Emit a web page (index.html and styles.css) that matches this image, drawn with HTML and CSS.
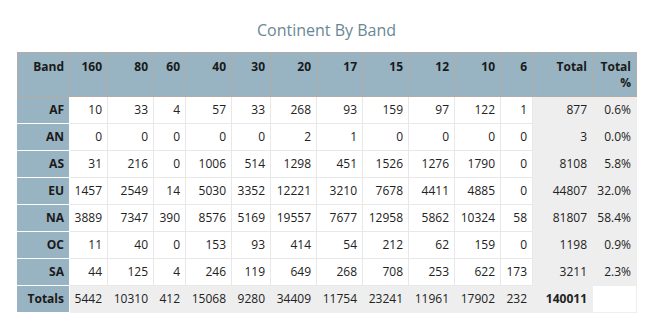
FILE: index.html
```html
<!DOCTYPE html>
<html>
<head>
<meta charset="utf-8">
<link rel="stylesheet" href="styles.css">
</head>
<body>
<div class="wrap">
  <h2 class="title">Continent By Band</h2>
  <table class="grid">
    <colgroup>
      <col class="c52"><col class="c38"><col class="c46"><col class="c32"><col class="c46"><col class="c39"><col class="c46"><col class="c46"><col class="c46"><col class="c46"><col class="c46"><col class="c32"><col class="c60"><col class="c44">
    </colgroup>
    <thead>
      <tr><th>Band</th><th>160</th><th>80</th><th>60</th><th>40</th><th>30</th><th>20</th><th>17</th><th>15</th><th>12</th><th>10</th><th>6</th><th>Total</th><th>Total %</th></tr>
    </thead>
    <tbody>
      <tr><th>AF</th><td>10</td><td>33</td><td>4</td><td>57</td><td>33</td><td>268</td><td>93</td><td>159</td><td>97</td><td>122</td><td>1</td><td class="tot">877</td><td class="tot">0.6%</td></tr>
      <tr><th>AN</th><td>0</td><td>0</td><td>0</td><td>0</td><td>0</td><td>2</td><td>1</td><td>0</td><td>0</td><td>0</td><td>0</td><td class="tot">3</td><td class="tot">0.0%</td></tr>
      <tr><th>AS</th><td>31</td><td>216</td><td>0</td><td>1006</td><td>514</td><td>1298</td><td>451</td><td>1526</td><td>1276</td><td>1790</td><td>0</td><td class="tot">8108</td><td class="tot">5.8%</td></tr>
      <tr><th>EU</th><td>1457</td><td>2549</td><td>14</td><td>5030</td><td>3352</td><td>12221</td><td>3210</td><td>7678</td><td>4411</td><td>4885</td><td>0</td><td class="tot">44807</td><td class="tot">32.0%</td></tr>
      <tr><th>NA</th><td>3889</td><td>7347</td><td>390</td><td>8576</td><td>5169</td><td>19557</td><td>7677</td><td>12958</td><td>5862</td><td>10324</td><td>58</td><td class="tot">81807</td><td class="tot">58.4%</td></tr>
      <tr><th>OC</th><td>11</td><td>40</td><td>0</td><td>153</td><td>93</td><td>414</td><td>54</td><td>212</td><td>62</td><td>159</td><td>0</td><td class="tot">1198</td><td class="tot">0.9%</td></tr>
      <tr><th>SA</th><td>44</td><td>125</td><td>4</td><td>246</td><td>119</td><td>649</td><td>268</td><td>708</td><td>253</td><td>622</td><td>173</td><td class="tot">3211</td><td class="tot">2.3%</td></tr>
    </tbody>
    <tfoot>
      <tr><th>Totals</th><td>5442</td><td>10310</td><td>412</td><td>15068</td><td>9280</td><td>34409</td><td>11754</td><td>23241</td><td>11961</td><td>17902</td><td>232</td><td class="grand">140011</td><td class="blank"></td></tr>
    </tfoot>
  </table>
</div>
</body>
</html>
```
FILE: styles.css
```css
html, body {
  margin: 0;
  padding: 0;
  background: #ffffff;
}
body {
  font-family: "Open Sans", "DejaVu Sans", sans-serif;
  color: #222222;
}
.wrap {
  width: 619px;
  margin-left: 17px;
  padding-top: 18px;
}
.title {
  margin: 0 0 10px 0;
  text-align: center;
  font-size: 16px;
  font-weight: normal;
  line-height: 24px;
  color: #6b8796;
}
.grid {
  width: 619px;
  table-layout: fixed;
  border-collapse: collapse;
  font-size: 12px;
  line-height: 16px;
}
.c52 { width: 52px; }
.c38 { width: 38px; }
.c46 { width: 46px; }
.c32 { width: 32px; }
.c39 { width: 39px; }
.c60 { width: 60px; }
.c44 { width: 44px; }
.grid th, .grid td {
  text-align: right;
  padding: 5px 5px 5px 2px;
  white-space: nowrap;
}
.grid thead th {
  background: #98b3c1;
  vertical-align: top;
  font-weight: bold;
  color: #1a1a1a;
  padding: 6px 5px 5px 2px;
  height: 32px;
  white-space: normal;
  border: 1px solid #b3aca6;
}
.grid tbody th, .grid tfoot th {
  background: #98b3c1;
  font-weight: bold;
  color: #1a1a1a;
  border: 1px solid #ffffff;
  border-left: 1px solid #98b3c1;
}
.grid tbody td {
  background: #ffffff;
  border: 1px solid #e8e8e8;
}
.grid tbody td.tot {
  background: #eeeeee;
  border-color: #eeeeee;
}
.grid tfoot td {
  background: #eeeeee;
  border: 1px solid #eeeeee;
}
.grid tfoot td.grand {
  font-weight: bold;
}
.grid tfoot td.blank {
  background: #ffffff;
  border: 1px solid #eeeeee;
}
.grid tbody td:last-child, .grid thead th:last-child {
  padding-right: 5px;
}
```
